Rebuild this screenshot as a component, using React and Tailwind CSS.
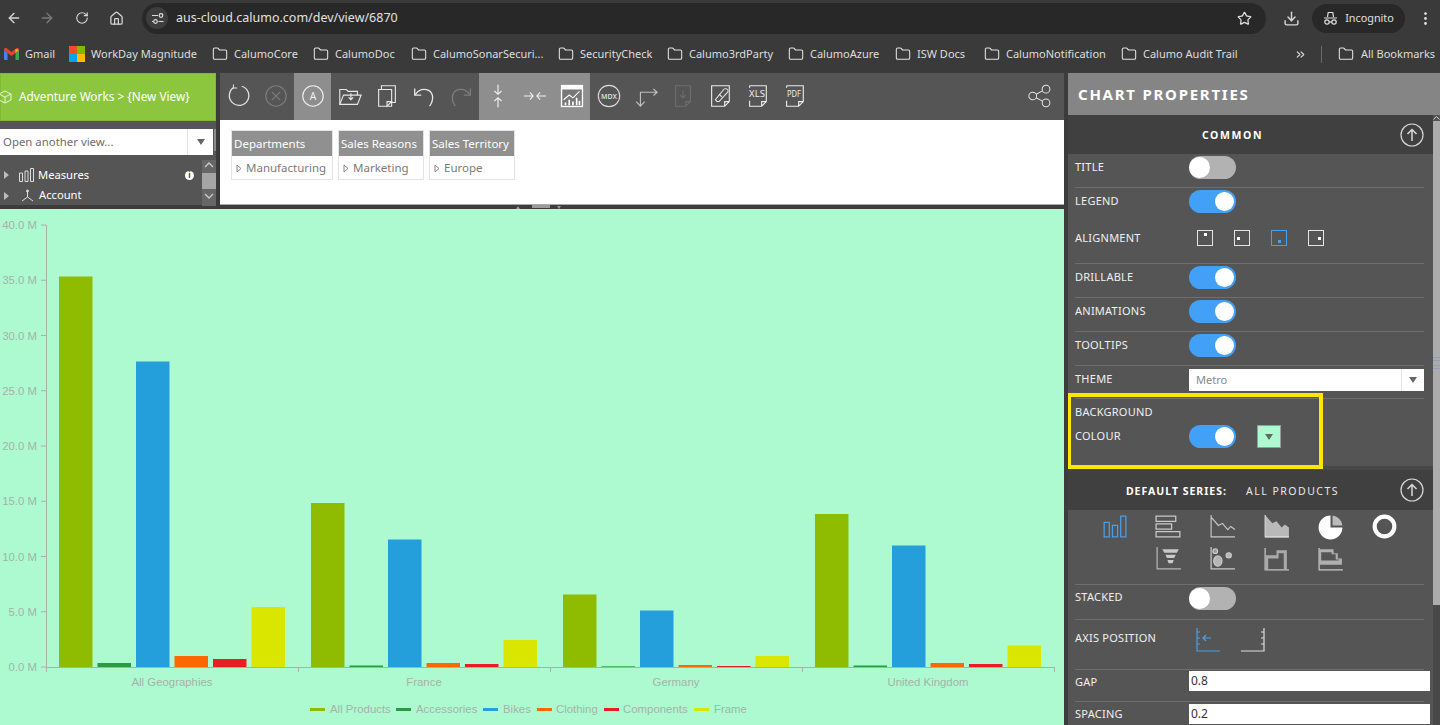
import { ArrowLeft, ArrowRight, ChevronsRight, Download, Folder, Home, MoreVertical, RotateCw, Star } from "lucide-react";

const bookmarks = [
  { label: "CalumoCore", w: "w-[101px]" },
  { label: "CalumoDoc", w: "w-[98px]" },
  { label: "CalumoSonarSecuri...", w: "w-[147px]" },
  { label: "SecurityCheck", w: "w-[109px]" },
  { label: "Calumo3rdParty", w: "w-[121px]" },
  { label: "CalumoAzure", w: "w-[107px]" },
  { label: "ISW Docs", w: "w-[89px]" },
  { label: "CalumoNotification", w: "w-[137px]" },
  { label: "Calumo Audit Trail", w: "w-[126px]" },
];

const filters = [
  { head: "Departments", item: "Manufacturing", w: "w-[102px]" },
  { head: "Sales Reasons", item: "Marketing", w: "w-[86px]" },
  { head: "Sales Territory", item: "Europe", w: "w-[86px]" },
];

const colors = ["#8fbc00", "#2b9a45", "#259fdc", "#ff6800", "#e81e26", "#dbe600"];
const groups = [
  { name: "All Geographies", x: 46, tops: [276.5, 663, 361.5, 656, 659, 607] },
  { name: "France", x: 298, tops: [503, 665.5, 539.5, 663, 664, 640] },
  { name: "Germany", x: 550, tops: [594.5, 666.3, 610.5, 665, 666, 656] },
  { name: "United Kingdom", x: 802, tops: [514, 665.5, 545.5, 663, 664, 645.5] },
];
const legend = [
  { name: "All Products", x: 310, tx: 330 },
  { name: "Accessories", x: 396, tx: 416 },
  { name: "Bikes", x: 483, tx: 503 },
  { name: "Clothing", x: 537, tx: 556 },
  { name: "Components", x: 604, tx: 623 },
  { name: "Frame", x: 694, tx: 714 },
];
const yTicks = ["40.0 M", "35.0 M", "30.0 M", "25.0 M", "20.0 M", "15.0 M", "10.0 M", "5.0 M", "0.0 M"];

function Icon({ children, size = 28, className = "" }) {
  return (
    <svg width={size} height={size} viewBox="0 0 28 28" fill="none" stroke="currentColor" strokeWidth="1.2" className={className}>
      {children}
    </svg>
  );
}

const toolbar = [
  { c: "text-[#e2e2e2]", d: <><path d="M17 3.500a10.500 10.500 0 1 1-8.500 1.200" strokeWidth="1.400" /><path d="M8 1.500v4h4" strokeWidth="1.100" /></> },
  { c: "text-[#7d7d7d]", d: <><circle cx="14" cy="14" r="11" /><path d="M9.500 9.500l9 9M18.500 9.500l-9 9" /></> },
  { c: "text-[#f0f0f0]", bg: "bg-[#8e8e8e]", d: <><circle cx="14" cy="14" r="11" /><text x="14" y="18" fontSize="11" textAnchor="middle" fill="currentColor" stroke="none" fontFamily="Noto Sans">A</text></> },
  { c: "text-[#e8e8e8]", d: <><path d="M3 23V7h7l2 2h10v4" /><path d="M3 23l4-10h19l-4 10z" /><path d="M15 11v7M12.500 15.500L15 18l2.500-2.500" /></> },
  { c: "text-[#e8e8e8]", d: <><path d="M8 7V3h15v18h-4" /><path d="M5 7h14v18H5zM19 20l-5 5v-5z" /></> },
  { c: "text-[#e8e8e8]", d: <><path d="M4 6v7h7" strokeWidth="1.400" /><path d="M4.500 12.500C8 7 14 5.500 19 8c5 3 6 10 1 17" strokeWidth="1.400" /></> },
  { c: "text-[#7d7d7d]", d: <><path d="M24 6v7h-7" strokeWidth="1.400" /><path d="M23.500 12.500C20 7 14 5.500 9 8c-5 3-6 10-1 17" strokeWidth="1.400" /></> },
  { c: "text-[#f2f2f2]", bg: "bg-[#8e8e8e]", d: <><path d="M14 2v10M10 8.500l4 3.500 4-3.500M14 26V16M10 19.500l4-3.500 4 3.500" strokeWidth="1.200" /></> },
  { c: "text-[#f2f2f2]", bg: "bg-[#8e8e8e]", d: <><path d="M2 14h10M8.500 10l3.500 4-3.500 4M26 14H16M19.500 10L16 14l3.500 4" strokeWidth="1.200" /></> },
  { c: "text-white", bg: "bg-[#8e8e8e]", d: <><rect x="2" y="2" width="24" height="24" fill="#fff" stroke="none" /><rect x="3.500" y="7" width="21" height="17.500" fill="#777" stroke="none" /><path d="M5 18l6-5 4 3 7-7" stroke="#fff" strokeWidth="1.200" /><path d="M7 24v-3M11 24v-6M15 24v-4M19 24v-8M22 24v-5" stroke="#fff" strokeWidth="1.800" /></> },
  { c: "text-[#dcdcdc]", d: <><circle cx="14" cy="14" r="11.500" /><text x="14" y="17" fontSize="7.500" textAnchor="middle" fill="currentColor" stroke="none" fontWeight="600" fontFamily="Noto Sans">MDX</text></> },
  { c: "text-[#c0c0c0]", d: <><path d="M8 24V10h18M22 6.500l4 3.500-4 3.500M3.500 20L8 25l4.500-5" /></> },
  { c: "text-[#6e6e6e]", d: <><path d="M6 3h16v17l-5 5H6zM22 20h-5v5M14 8v8M11 13l3 3 3-3" /></> },
  { c: "text-[#ececec]", d: <><path d="M5 3h19v17l-5 5H5zM24 20h-5v5" /><path d="M11 20l-2-2 9-11c1-1 3-1 4 0s1 2 0 3l-9 10z" strokeWidth="1.100" /><path d="M13 12l3 3" /></> },
  { c: "text-[#ececec]", d: <><path d="M6 3h18v17l-5 5H6v-6M24 20h-5v5M6 3v2" /><text x="14" y="15" fontSize="10" textAnchor="middle" fill="currentColor" stroke="none" fontFamily="Noto Sans" textLength="17" lengthAdjust="spacingAndGlyphs">XLS</text></> },
  { c: "text-[#ececec]", d: <><path d="M6 3h18v17l-5 5H6v-6M24 20h-5v5M6 3v2" /><text x="14" y="15" fontSize="10" textAnchor="middle" fill="currentColor" stroke="none" fontFamily="Noto Sans" textLength="15" lengthAdjust="spacingAndGlyphs">PDF</text></> },
];

const seriesIcons = [
  { c: "text-[#4a9fe8]", d: <><path d="M4 9h5v14H4zM12 12h5v11h-5zM20 3h5v20h-5z" /></> },
  { c: "text-[#c9c9c9]", d: <><path d="M2 3h19v5H2zM2 10.500h15v5H2zM2 18h23v5H2z" /></> },
  { c: "text-[#c9c9c9]", d: <><path d="M3 2v21h23M3 4l7 8 4-2 5 6 3-3 4 3" strokeWidth="1.100" /></> },
  { c: "text-[#b9b9b9]", d: <><path d="M3 2l7 8 4-2 5 6 3-3 4 3v10H3z" fill="currentColor" stroke="none" /><path d="M3 2v21h23" stroke="#ddd" strokeWidth="1" /></> },
  { c: "text-white", d: <><path d="M14 2.500a11.500 11.500 0 1 0 11.500 11.500H14z" fill="#fff" stroke="none" /><path d="M16 2.500a11 11 0 0 1 9.500 9.500H16z" fill="#bcbcbc" stroke="none" /></> },
  { c: "text-white", d: <><circle cx="14" cy="13" r="9.500" stroke="#fff" strokeWidth="4" /></> },
  { c: "text-[#b5b5b5]", d: <><path d="M3 2v21h23" /><path d="M8 4h16l-2 3.500H10zM11 9.500h10l-1.500 3h-7zM13 14.500h6l-1 3h-4z" fill="#c9c9c9" stroke="none" /></> },
  { c: "text-[#c9c9c9]", d: <><path d="M3 2v21h23" /><ellipse cx="9.500" cy="15.500" rx="4" ry="5" fill="#b5b5b5" /><circle cx="7" cy="6" r="2.200" fill="#999" /><circle cx="20" cy="10" r="2.500" fill="#b5b5b5" /></> },
  { c: "text-[#c4c4c4]", d: <><path d="M3 3v21h23" /><path d="M3 10h5v3H6v11H3zM8 10h6V5h10v19h-3V8h-5v5H8z" fill="#a9a9a9" stroke="none" /></> },
  { c: "text-[#c9c9c9]", d: <><path d="M3 3v21h23" /><path d="M3 4h14v4h4v5h4v6H3zM5 7v8h17v-1h-3V9h-4V7z" fill="#b0b0b0" stroke="none" /></> },
];

const labelClass = "text-[11px] leading-[14px] tracking-[0.25px] text-[#f0f0f0]";

function Toggle({ on }) {
  return on ? (
    <div className="flex h-[23px] w-[47px] shrink-0 items-center justify-end rounded-full bg-[#42a0f6] pr-[2px]">
      <div className="size-[19px] rounded-full bg-white" />
    </div>
  ) : (
    <div className="flex h-[23px] w-[47px] shrink-0 items-center rounded-full bg-[#b2b2b2]">
      <div className="size-[21px] rounded-full bg-white" />
    </div>
  );
}

function CircleUp() {
  return (
    <svg width="24" height="24" viewBox="0 0 24 24" fill="none" stroke="#d8d8d8" strokeWidth="1.200">
      <circle cx="12" cy="12" r="11" />
      <path d="M12 18V7M7.500 11L12 6.500l4.500 4.500" strokeWidth="1.500" />
    </svg>
  );
}

function Row({ label, on, className = "h-[34px]", labelTop = "mt-[4px]" }) {
  return (
    <div className={`ml-[7px] mr-[9px] flex border-b border-[#6e6e6e] pt-[2px] ${className}`}>
      <span className={`w-[114px] shrink-0 ${labelTop} ${labelClass}`}>{label}</span>
      {on !== undefined && <Toggle on={on} />}
    </div>
  );
}

function Box({ blue, dot }) {
  return (
    <div className={`relative size-[16px] border ${blue ? "border-[#4a9fe8]" : "border-[#e4e4e4]"}`}>
      <div className={`absolute size-[3px] ${blue ? "bg-[#4a9fe8]" : "bg-white"} ${dot}`} />
    </div>
  );
}

function Field({ value, className }) {
  return (
    <div className={`flex h-[20px] w-[241px] shrink-0 items-center bg-white pl-[2px] text-[12px] text-[#333] ${className}`}>{value}</div>
  );
}

function BrowserBars() {
  return (
    <>
      <div className="flex h-[36px] shrink-0 items-center bg-[#3a3a3a] pr-[6px]">
        <div className="flex w-[142px] shrink-0 items-center text-[#d6d6d6]">
          <ArrowLeft className="ml-[6px] size-[16px]" />
          <ArrowRight className="ml-[17px] size-[16px] text-[#7b7b7b]" />
          <RotateCw className="ml-[20px] size-[14px]" />
          <Home className="ml-[20px] size-[15px]" />
        </div>
        <div className="flex h-[31px] flex-1 items-center rounded-full bg-[#282828] pl-[4px] pr-[14px]">
          <div className="flex size-[22px] items-center justify-center rounded-full bg-[#3e3e3e]">
            <svg width="13" height="13" viewBox="0 0 13 13" fill="none" stroke="#ddd" strokeWidth="1.200">
              <path d="M1 3.500h6M7.500 9.500h5M1 9.500h1" />
              <circle cx="10" cy="3.500" r="1.800" />
              <circle cx="4.500" cy="9.500" r="1.800" />
            </svg>
          </div>
          <span className="ml-[8px] text-[12.500px] text-[#e2e2e2]">aus-cloud.calumo.com/dev/view/6870</span>
          <Star className="ml-auto size-[15px] text-[#e0e0e0]" />
        </div>
        <Download className="ml-[17px] size-[17px] text-[#d6d6d6]" />
        <div className="ml-[12px] flex h-[29px] w-[93px] items-center justify-center gap-[7px] rounded-full bg-[#282828] text-[10.800px] text-[#e0e0e0]">
          <svg width="15" height="15" viewBox="0 0 15 15" fill="none" stroke="#e0e0e0" strokeWidth="1.200">
            <path d="M4.500 6l.7-4.500h4.600l.7 4.500M1 7h13" />
            <circle cx="4" cy="11" r="2.200" />
            <circle cx="11" cy="11" r="2.200" />
            <path d="M6.200 11h2.600" />
          </svg>
          Incognito
        </div>
        <MoreVertical className="ml-[12px] size-[17px] text-[#e0e0e0]" />
      </div>
      <div className="flex h-[36px] shrink-0 items-center bg-[#3a3a3a] text-[11px] text-[#dedede]">
        <div className="flex w-[69px] shrink-0 items-center pl-[4px]">
          <svg width="15" height="12" viewBox="0 0 15 12">
            <path d="M0 2v9a1 1 0 0 0 1 1h2.500V5z" fill="#4285f4" />
            <path d="M15 2v9a1 1 0 0 1-1 1h-2.500V5z" fill="#34a853" />
            <path d="M0 2c0-2 2-2.500 3-1.500l4.500 3.500L12 .5c1-1 3-.5 3 1.500l-3.500 3-4 3-4-3z" fill="#ea4335" />
            <path d="M11.500 1L15 2l-3.500 3z" fill="#fbbc04" />
          </svg>
          <span className="ml-[6px]">Gmail</span>
        </div>
        <div className="flex w-[143px] shrink-0 items-center">
          <div className="grid size-[16px] grid-cols-2">
            <div className="bg-[#f25022]" />
            <div className="bg-[#7fba00]" />
            <div className="bg-[#00a4ef]" />
            <div className="bg-[#ffb900]" />
          </div>
          <span className="ml-[6px]">WorkDay Magnitude</span>
        </div>
        {bookmarks.map((b) => (
          <div key={b.label} className={`flex shrink-0 items-center ${b.w}`}>
            <Folder className="size-[16px] text-[#e2e2e2]" strokeWidth={1.600} />
            <span className="ml-[6px] whitespace-nowrap">{b.label}</span>
          </div>
        ))}
        <ChevronsRight className="ml-[47px] size-[13px] text-[#dedede]" />
        <div className="ml-[14px] h-[17px] w-px bg-[#6a6a6a]" />
        <Folder className="ml-[16px] size-[16px] text-[#e2e2e2]" strokeWidth={1.600} />
        <span className="ml-[7px] whitespace-nowrap">All Bookmarks</span>
      </div>
    </>
  );
}

function LeftPanel() {
  return (
    <div className="flex h-[132px] w-[216px] shrink-0 flex-col bg-[#555]">
      <div className="flex h-[48px] shrink-0 items-center border border-[#7fb935] bg-[#8cc63f] text-[11.800px] text-white">
        <svg width="14" height="14" viewBox="0 0 14 14" fill="none" stroke="#e8f5d5" strokeWidth="1" className="-ml-[3px]">
          <path d="M7 1l6 3v6l-6 3-6-3V4zM1 4l6 3 6-3M7 7v6" />
        </svg>
        <span className="ml-[7px]">Adventure Works &gt; {"{New View}"}</span>
      </div>
      <div className="mt-[8px] flex h-[26px] shrink-0 items-start">
        <div className="flex h-[26px] w-[213px] items-center bg-white pl-[3px] text-[11.400px] text-[#6d6d6d]">
          Open another view...
          <div className="ml-auto flex h-full w-[26px] items-center justify-center border-l border-[#e4e4e4]">
            <div className="h-0 w-0 border-x-[4px] border-t-[6px] border-x-transparent border-t-[#666]" />
          </div>
        </div>
        <div className="ml-[1px] h-[22px] w-[2px] bg-[#8a8a8a]" />
      </div>
      <div className="flex flex-1 text-[11.200px] text-white">
        <div className="flex-1 pt-[10px]">
          <div className="flex h-[20px] items-center">
            <div className="ml-[4px] h-0 w-0 border-y-[4px] border-l-[5px] border-y-transparent border-l-[#bbb]" />
            <svg width="16" height="14" viewBox="0 0 16 14" fill="none" stroke="#ddd" className="ml-[10px]">
              <path d="M.5 5h3v8.500h-3zM6 3h3v10.500H6zM11.500.5h3v13h-3z" />
            </svg>
            <span className="ml-[3px]">Measures</span>
            <div className="ml-auto mr-[8px] flex size-[9px] items-center justify-center rounded-full bg-white text-[8px] font-bold leading-none text-[#444]">i</div>
          </div>
          <div className="flex h-[21px] items-center">
            <div className="ml-[4px] h-0 w-0 border-y-[4px] border-l-[5px] border-y-transparent border-l-[#bbb]" />
            <svg width="15" height="14" viewBox="0 0 15 14" fill="none" stroke="#ddd" className="ml-[11px]">
              <path d="M7.500 2v6L2 12M7.500 8l5.500 4" />
              <circle cx="7.500" cy="2" r="1" fill="#ddd" />
            </svg>
            <span className="ml-[4px]">Account</span>
          </div>
        </div>
        <div className="mt-[5px] flex w-[14px] flex-col items-center bg-[#666] text-[#ccc]">
          <svg width="12" height="10" viewBox="0 0 12 10" fill="none" stroke="currentColor" strokeWidth="1.300"><path d="M2 7l4-4 4 4" /></svg>
          <div className="mt-[3px] h-[16px] w-full bg-[#a5a5a5]" />
          <svg width="12" height="10" viewBox="0 0 12 10" fill="none" stroke="currentColor" strokeWidth="1.300" className="mt-[2px]"><path d="M2 3l4 4 4-4" /></svg>
        </div>
      </div>
    </div>
  );
}

function Toolbar() {
  return (
    <div className="flex h-[47px] items-stretch bg-[#555]">
      {toolbar.map((t, i) => (
        <div key={i} className={`flex w-[37px] shrink-0 items-center justify-center pb-[2px] ${t.bg ?? ""} ${t.c}`}>
          <Icon size={26}>{t.d}</Icon>
        </div>
      ))}
      <div className="ml-auto mr-[12px] flex items-center pb-[2px] text-[#e2e2e2]">
        <Icon size={24}>
          <circle cx="5.500" cy="14" r="4.500" />
          <circle cx="21" cy="6" r="4.500" />
          <circle cx="21" cy="22" r="4.500" />
          <path d="M9.500 12l7.500-4M9.500 16l7.500 4" />
        </Icon>
      </div>
    </div>
  );
}

function Filters() {
  return (
    <div className="flex h-[85px] gap-[5px] border-b border-[#aaa] bg-white pl-[11px] pt-[10px]">
      {filters.map((f) => (
        <div key={f.head} className={`h-[50px] border border-[#e3e3e3] ${f.w}`}>
          <div className="flex h-[25px] items-center whitespace-nowrap bg-[#909090] pl-[2px] text-[11.500px] text-white">{f.head}</div>
          <div className="flex h-[24px] items-center pl-[4px] text-[11.500px] text-[#7a7a7a]">
            <svg width="7" height="9" viewBox="0 0 7 9" fill="none" stroke="#888">
              <path d="M1 1l4 3.500-4 3.500z" />
            </svg>
            <span className="ml-[3px] whitespace-nowrap">{f.item}</span>
          </div>
        </div>
      ))}
    </div>
  );
}

function Chart() {
  const label = "#a6b2aa";
  return (
    <svg width="1064" height="516" viewBox="0 209 1064 516" className="block shrink-0 bg-[#adfad0]" fontFamily="Liberation Sans" fontSize="11.400">
      {yTicks.map((t, i) => {
        const y = 225 + i * 55.25;
        return (
          <g key={t}>
            <path d={`M41 ${y}h5`} stroke={label} />
            <text x="37" y={y + 4} textAnchor="end" fill={label}>{t}</text>
          </g>
        );
      })}
      <path d="M46.500 225V667.500H1054" stroke={label} fill="none" />
      {[46, 298, 550, 802, 1054].map((x) => (
        <path key={x} d={`M${x}.5 667v5`} stroke={label} />
      ))}
      {groups.map((g) => (
        <g key={g.name}>
          {g.tops.map((top, i) => (
            <rect key={i} x={g.x + 13 + i * 38.500} y={top} width="33.500" height={667 - top} fill={colors[i]} />
          ))}
          <text x={g.x + 126} y="686" textAnchor="middle" fill={label}>{g.name}</text>
        </g>
      ))}
      {legend.map((l, i) => (
        <g key={l.name}>
          <rect x={l.x} y="708" width="15" height="3" fill={colors[i]} />
          <text x={l.tx} y="713" fill={label}>{l.name}</text>
        </g>
      ))}
    </svg>
  );
}

function Properties() {
  return (
    <div className="relative flex h-[652px] w-[372px] flex-col overflow-hidden">
      <div className="flex h-[42px] shrink-0 items-center bg-[#858585] pl-[10px] text-[15px] font-bold tracking-[1.750px] text-white">
        CHART PROPERTIES
      </div>
      <div className="flex flex-1 overflow-hidden">
        <div className="w-[365px] shrink-0 bg-[#555]">
          <div className="relative flex h-[39px] items-center justify-center bg-[#404040] pr-[36px] pt-[2px] text-[10.500px] font-bold tracking-[1.600px] text-white">
            COMMON
            <div className="absolute right-[9px] top-[8px]"><CircleUp /></div>
          </div>
          <Row label="TITLE" on={false} />
          <Row label="LEGEND" on className="h-[26px] border-b-0" />
          <div className="ml-[7px] mr-[9px] flex h-[50px] items-start border-b border-[#6e6e6e]">
            <span className={`mt-[17px] w-[114px] shrink-0 ${labelClass}`}>ALIGNMENT</span>
            <div className="mt-[16px] flex gap-[21px] pl-[8px]">
              <Box dot="left-[5.500px] top-[2px]" />
              <Box dot="left-[2px] top-[5.500px]" />
              <Box blue dot="left-[5.500px] bottom-[2px]" />
              <Box dot="right-[2px] top-[5.500px]" />
            </div>
          </div>
          <Row label="DRILLABLE" on />
          <Row label="ANIMATIONS" on />
          <Row label="TOOLTIPS" on />
          <div className="ml-[7px] mr-[9px] flex h-[33px] border-b border-[#6e6e6e] pt-[3px]">
            <span className={`mt-[3px] w-[114px] shrink-0 ${labelClass}`}>THEME</span>
            <div className="flex h-[22px] flex-1 items-center bg-white pl-[7px] text-[11px] text-[#888]">
              Metro
              <div className="ml-auto flex h-full w-[23px] items-center justify-center border-l border-[#e4e4e4]">
                <div className="h-0 w-0 border-x-[4px] border-t-[6px] border-x-transparent border-t-[#666]" />
              </div>
            </div>
          </div>
          <div className="mx-[7px] h-[67px] pt-[6px]">
            <div className={labelClass}>BACKGROUND</div>
            <div className="mt-[6px] flex items-start">
              <span className={`mt-[4px] w-[114px] shrink-0 ${labelClass}`}>COLOUR</span>
              <Toggle on />
              <div className="ml-[21px] flex h-[23px] w-[24px] items-center justify-center border border-[#999] bg-[#adfad0]">
                <div className="h-0 w-0 border-x-[4px] border-t-[6px] border-x-transparent border-t-[#666]" />
              </div>
            </div>
          </div>
          <div className="relative flex h-[44px] items-center justify-center border-t-[4px] border-[#484848] bg-[#404040] pr-[36px] pt-[3px] text-[10.500px] text-[#e8e8e8]">
            <span className="font-bold tracking-[1px] text-white">DEFAULT SERIES:</span>
            <span className="ml-[19px] tracking-[1.500px]">ALL PRODUCTS</span>
            <div className="absolute right-[9px] top-[8px]"><CircleUp /></div>
          </div>
          <div className="grid h-[74px] grid-cols-[repeat(6,54px)] grid-rows-[32px_32px] pl-[19px] pt-[1px]">
            {seriesIcons.map((s, i) => (
              <div key={i} className={`flex items-center justify-center ${s.c} ${i === 6 ? "col-start-2" : ""}`}>
                <Icon size={29}>{s.d}</Icon>
              </div>
            ))}
          </div>
          <div className="ml-[7px] mr-[9px] border-t border-[#6e6e6e]" />
          <Row label="STACKED" on={false} className="h-[35px]" labelTop="mt-[3px]" />
          <div className="ml-[7px] mr-[9px] flex h-[50px] items-start border-b border-[#6e6e6e]">
            <span className={`mt-[11px] w-[114px] shrink-0 ${labelClass}`}>AXIS POSITION</span>
            <div className="mt-[7px] flex gap-[21px] pl-[7px]">
              <svg width="24" height="26" viewBox="0 0 24 26" fill="none" stroke="#4a9fe8" strokeWidth="1.200">
                <path d="M1 1v23h23M1 5h3M1 11h3M1 17h3M7 11h8M10 8l-3 3 3 3" />
              </svg>
              <svg width="24" height="26" viewBox="0 0 24 26" fill="none" stroke="#dedede" strokeWidth="1.200">
                <path d="M23 1v23H0M23 5h-3M23 11h-3M23 17h-3" />
              </svg>
            </div>
          </div>
          <div className="ml-[7px] mr-[9px] flex h-[32px] border-b border-[#6e6e6e]">
            <span className={`mt-[5px] w-[114px] shrink-0 ${labelClass}`}>GAP</span>
            <Field value="0.8" className="mt-[1px]" />
          </div>
          <div className="mx-[7px] flex h-[32px]">
            <span className={`mt-[5px] w-[114px] shrink-0 ${labelClass}`}>SPACING</span>
            <Field value="0.2" className="mt-[2px]" />
          </div>
        </div>
        <div className="flex flex-1 flex-col bg-[#484848]">
          <div className="flex h-[6px] items-start justify-center bg-[#555]">
            <svg width="7" height="5" viewBox="0 0 7 5" fill="none" stroke="#ccc"><path d="M.5 4.500l3-3 3 3" /></svg>
          </div>
          <div className="flex h-[484px] flex-col items-center justify-center bg-[#acacac]">
            <div className="h-[12px] w-full border-y-[4px] border-double border-[#8fa0b8]" />
          </div>
        </div>
      </div>
      {/* yellow highlight drawn over the panel */}
      <div className="absolute left-[-1px] top-[320px] h-[76px] w-[256px] border-[4px] border-[#ffe600]" />
    </div>
  );
}

export default function App() {
  return (
    <div className="flex h-[725px] w-[1440px] flex-col overflow-hidden bg-[#3c3c3c] font-['Noto_Sans',sans-serif]">
      <BrowserBars />
      <div className="flex min-h-0 flex-1 pt-[1px]">
        <div className="flex w-[1064px] shrink-0 flex-col">
          <div className="flex h-[132px] shrink-0 gap-[4px]">
            <LeftPanel />
            <div className="flex-1">
              <Toolbar />
              <Filters />
            </div>
          </div>
          <div className="flex h-[4px] shrink-0 items-start gap-[2px] pl-[516px]">
            <div className="mt-[1px] h-0 w-0 border-x-[2px] border-b-[3px] border-x-transparent border-b-[#999]" />
            <div className="ml-[10px] h-[3px] w-[18px] bg-[#9a9a9a]" />
            <div className="ml-[5px] mt-[1px] h-0 w-0 border-x-[2px] border-t-[3px] border-x-transparent border-t-[#999]" />
          </div>
          <Chart />
        </div>
        <div className="ml-[4px]">
          <Properties />
        </div>
      </div>
    </div>
  );
}
